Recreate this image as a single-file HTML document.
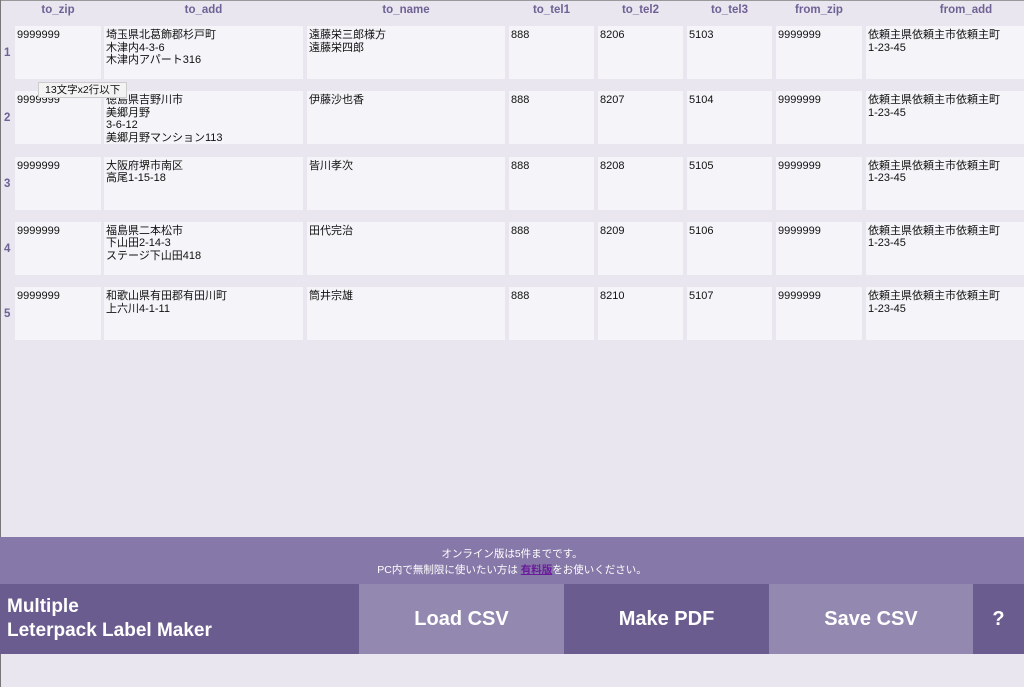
<!DOCTYPE html>
<html><head><meta charset="utf-8"><style>
*{margin:0;padding:0;box-sizing:border-box}
body{width:1024px;height:687px;background:#e9e6ef;position:relative;overflow:hidden;font-family:"Liberation Sans","Noto Sans CJK JP",sans-serif}
.h{position:absolute;top:4px;font-size:11.5px;font-weight:bold;color:#6e6294;text-align:center}
.c{position:absolute;background:#f5f4f8;font-size:11px;line-height:12.5px;color:#111;padding:3px 2px}
.rn{position:absolute;left:4px;font-size:11.5px;font-weight:bold;color:#6e6294}
.b{position:absolute;top:584px;height:70px;color:#fff;font-weight:bold;font-size:20px;display:flex;align-items:center;justify-content:center}
</style></head><body>
<div style="position:absolute;left:0;top:0;width:1024px;height:1px;background:#999"></div>
<div style="position:absolute;left:0;top:0;width:1px;height:687px;background:#777"></div>
<div class="h" style="left:15px;width:86px">to_zip</div>
<div class="h" style="left:104px;width:199px">to_add</div>
<div class="h" style="left:307px;width:198px">to_name</div>
<div class="h" style="left:509px;width:85px">to_tel1</div>
<div class="h" style="left:598px;width:85px">to_tel2</div>
<div class="h" style="left:687px;width:85px">to_tel3</div>
<div class="h" style="left:776px;width:86px">from_zip</div>
<div class="h" style="left:866px;width:200px">from_add</div>
<div id="rows"></div>
<script>
var d=[["9999999","埼玉県北葛飾郡杉戸町<br>木津内4-3-6<br>木津内アパート316","遠藤栄三郎様方<br>遠藤栄四郎","8206","5103"],
["9999999","徳島県吉野川市<br>美郷月野<br>3-6-12<br>美郷月野マンション113","伊藤沙也香","8207","5104"],
["9999999","大阪府堺市南区<br>高尾1-15-18","皆川孝次","8208","5105"],
["9999999","福島県二本松市<br>下山田2-14-3<br>ステージ下山田418","田代完治","8209","5106"],
["9999999","和歌山県有田郡有田川町<br>上六川4-1-11","筒井宗雄","8210","5107"]];
var cols=[[15,86],[104,199],[307,198],[509,85],[598,85],[687,85],[776,86],[866,160]];
var h="";
d.forEach(function(r,i){var t=26+i*65.3;
var v=[r[0],r[1],r[2],"888",r[3],r[4],"9999999","依頼主県依頼主市依頼主町<br>1-23-45"];
h+='<div class="rn" style="top:'+(t+21)+'px">'+(i+1)+'</div>';
cols.forEach(function(c,j){h+='<div class="c" style="left:'+c[0]+'px;top:'+t+'px;width:'+c[1]+'px;height:53px">'+v[j]+'</div>';});});
document.getElementById("rows").innerHTML=h;
</script>
<div style="position:absolute;left:38px;top:82px;height:16px;padding:0 6px;background:#f3f3f3;border:1px solid #ccc;font-size:10.5px;line-height:14px;color:#111">13文字x2行以下</div>
<div style="position:absolute;left:0;top:537px;width:1024px;height:47px;background:#8678a8;color:#fff;font-size:10.5px;text-align:center;line-height:16px;padding-top:9px">オンライン版は5件までです。<br>PC内で無制限に使いたい方は <u style="color:#6a1b9a;font-weight:bold">有料版</u>をお使いください。</div>
<div class="b" style="left:0;width:359px;background:#6b5c8f;justify-content:flex-start;padding-left:7px;font-size:19px;line-height:24px">Multiple<br>Leterpack Label Maker</div>
<div class="b" style="left:359px;width:205px;background:#9388b0">Load CSV</div>
<div class="b" style="left:564px;width:205px;background:#6b5c8f">Make PDF</div>
<div class="b" style="left:769px;width:204px;background:#9388b0">Save CSV</div>
<div class="b" style="left:973px;width:51px;background:#6b5c8f">?</div>
</body></html>
